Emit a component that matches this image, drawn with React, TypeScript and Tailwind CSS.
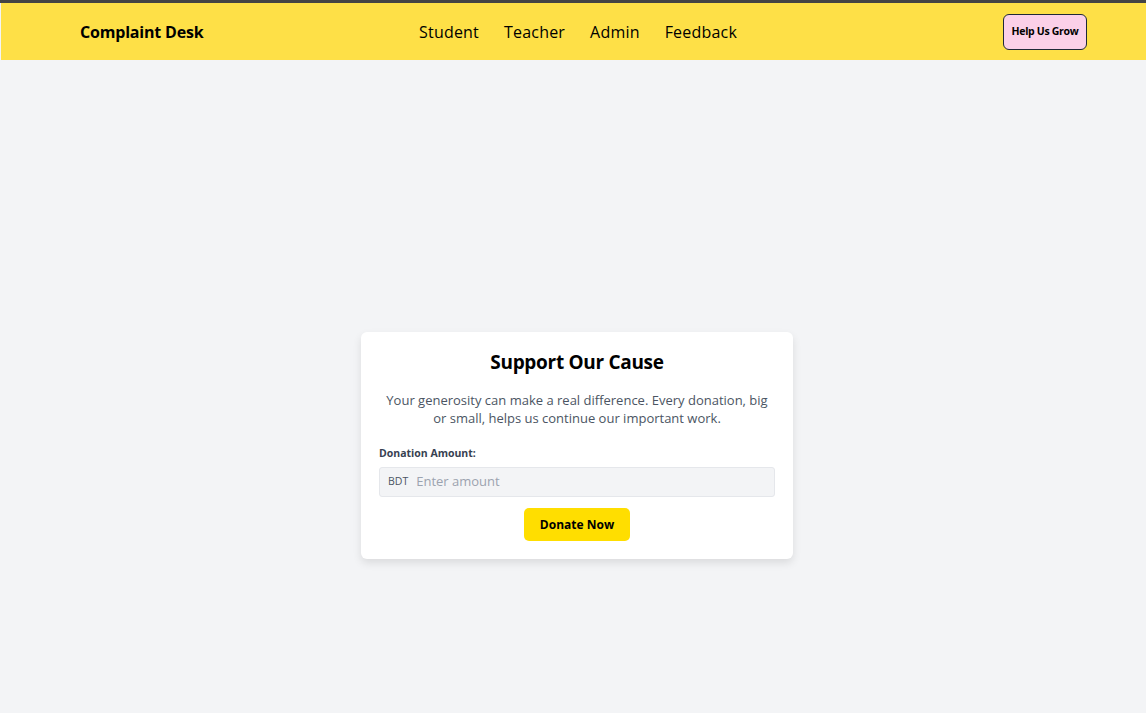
import React from "react";

function Navbar() {
  return (
    <div className="border-t-[3px] border-[#444444] pl-px">
      <nav className="flex h-[57px] items-center bg-[#fee047] pl-[79px] pr-[59px]">
        <div className="w-[339px] text-[16px] font-bold tracking-[-0.2px] text-black">Complaint Desk</div>
        <div className="flex items-center gap-[25px] text-[16px] font-medium tracking-[0.2px] text-black">
          <a href="#">Student</a>
          <a href="#">Teacher</a>
          <a href="#">Admin</a>
          <a href="#">Feedback</a>
        </div>
        <div className="flex flex-1 justify-end">
          <button className="h-[36px] w-[84px] rounded-[6px] border border-[#1f2937] bg-[#fbd0e8] text-[10.5px] font-bold tracking-[-0.3px] text-black">
            Help Us Grow
          </button>
        </div>
      </nav>
    </div>
  );
}

function DonationCard() {
  return (
    <div className="w-[432px] rounded-[6px] bg-white px-[18px] pb-[18px] pt-[16px] shadow-[0_4px_8px_rgba(0,0,0,0.1)]">
      <h2 className="text-center text-[19px] font-bold leading-[28px] tracking-[-0.3px] text-black">Support Our Cause</h2>
      <p className="mt-[15px] px-[4px] text-center text-[13px] leading-[18px] text-[#4b5563]">
        Your generosity can make a real difference. Every donation, big or small, helps us continue our important work.
      </p>
      <label className="mt-[19px] block text-[10.5px] font-bold leading-[14px] text-[#374151]">Donation Amount:</label>
      <div className="mt-[7px] flex h-[30px] items-center rounded-[3px] border border-[#e5e7eb] bg-[#f3f4f6] px-[8px]">
        <span className="text-[10.5px] text-[#4b5563]">BDT</span>
        <input
          placeholder="Enter amount"
          className="ml-[8px] flex-1 bg-transparent text-[13px] text-black outline-none placeholder:text-[#9ca3af]"
        />
      </div>
      <div className="mt-[11px] flex justify-center">
        <button className="h-[33px] w-[106px] rounded-[5px] bg-[#ffde00] text-[12px] font-bold text-black">Donate Now</button>
      </div>
    </div>
  );
}

export default function App() {
  return (
    <div className="min-h-screen bg-[#f3f4f6] font-['Open_Sans',sans-serif]">
      <Navbar />
      <main className="flex justify-center pl-[8px] pt-[272px]">
        <DonationCard />
      </main>
    </div>
  );
}
